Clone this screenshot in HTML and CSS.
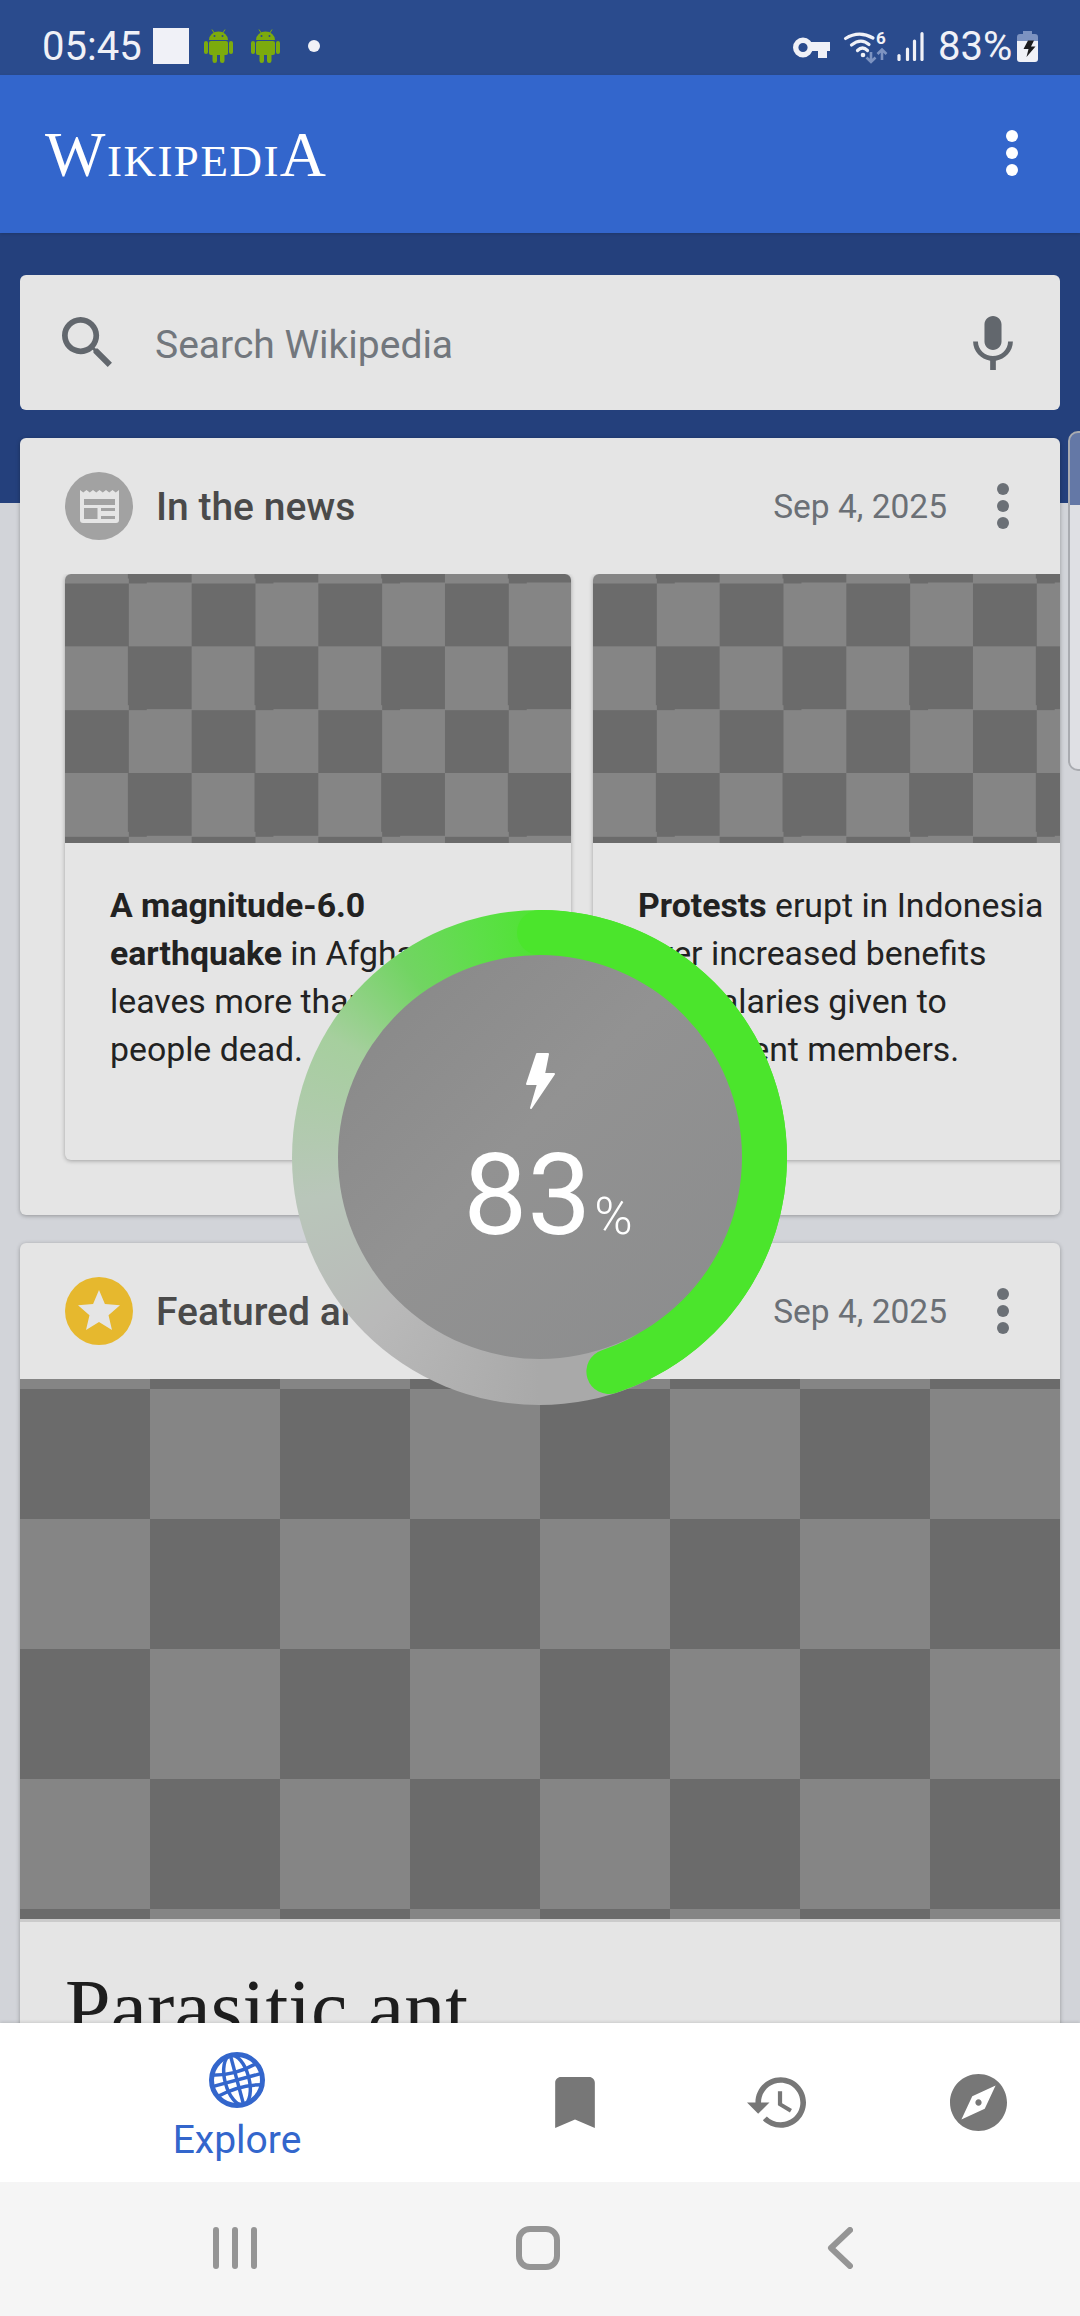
FILE: index.html
```html
<!DOCTYPE html>
<html lang="en">
<head>
  <meta charset="UTF-8">
  <meta name="viewport" content="width=device-width, initial-scale=1.0">
  <title>Wikipedia</title>
  <link rel="stylesheet" href="styles.css">
</head>
<body>
  <div class="status-bar">
    <span class="clock">05:45</span>
    <span class="notif-square"></span>
    <svg class="android" viewBox="0 0 29 34"><use href="#android-bot"/></svg>
    <svg class="android android-second" viewBox="0 0 29 34">
      <g id="android-bot" fill="#7cab0d">
        <path d="M5 11a9.500 8.500 0 0 1 19 0z"/>
        <path d="M8 0.500l2.500 4M21 0.500l-2.500 4" stroke="#7cab0d" stroke-width="1"/>
        <rect x="5" y="12" width="19" height="14" rx="2"/>
        <rect x="0" y="12" width="4" height="13" rx="2"/>
        <rect x="25" y="12" width="4" height="13" rx="2"/>
        <rect x="8.500" y="22" width="4.500" height="12" rx="2.200"/>
        <rect x="16" y="22" width="4.500" height="12" rx="2.200"/>
        <circle cx="10.500" cy="7" r="1" fill="#2a4b8d"/>
        <circle cx="18.500" cy="7" r="1" fill="#2a4b8d"/>
      </g>
    </svg>
    <span class="notif-dot"></span>
    <span class="status-spacer"></span>
    <svg class="key-icon" viewBox="0 0 37 21">
      <circle cx="10" cy="10.500" r="7.300" fill="none" stroke="#f0f1f7" stroke-width="5.400"/>
      <path d="M17 5h20v9h-3v7h-9v-7h-8z" fill="#f0f1f7"/>
    </svg>
    <svg class="wifi-icon" viewBox="0 0 42 32">
      <g fill="none" stroke="#f0f1f7" stroke-width="3.200" stroke-linecap="round">
        <path d="M1.500 7.500Q15 -1 29 7"/>
        <path d="M7.500 14Q17 6.500 25 13.500"/>
        <path d="M13.500 19.500Q18.500 14.500 23.500 19.500"/>
      </g>
      <circle cx="19" cy="24" r="2.300" fill="#f0f1f7"/>
      <text class="wifi-six" x="32" y="13">6</text>
      <g fill="none" stroke="#7d93c1" stroke-width="2.600">
        <path d="M27 21v10M22.500 26.500l4.500 4.500 4.500-4.500"/>
        <path d="M38 29V19M33.500 23l4.500-4.500 4.500 4.500"/>
      </g>
    </svg>
    <svg class="signal-icon" viewBox="0 0 27 29">
      <g stroke="#f0f1f7" stroke-width="3.200" stroke-linecap="round">
        <path d="M2 23.500v4"/>
        <path d="M10.500 17v10.500"/>
        <path d="M17.500 9v18.500"/>
        <path d="M25 1.700v25.800"/>
      </g>
    </svg>
    <span class="battery-text">83%</span>
    <svg class="battery-icon" viewBox="0 0 21 31">
      <path d="M6 0h9v3h3a3 3 0 0 1 3 3v5H0V6a3 3 0 0 1 3-3h3z" fill="#7d93c1"/>
      <path d="M0 10h21v18a3 3 0 0 1-3 3H3a3 3 0 0 1-3-3z" fill="#f0f1f7"/>
      <path d="M11 9.500h6l-3 6h4.500l-9 10.500 2-8H6.500z" fill="#1c1c1e"/>
    </svg>
  </div>

  <div class="toolbar">
    <span class="wordmark">WikipediA</span>
    <span class="dots dots-white"><i></i><i></i><i></i></span>
  </div>

  <div class="content">
    <div class="search-card">
      <svg class="search-icon" viewBox="3 3 17.500 17.500"><path d="M15.500 14h-.79l-.28-.27C15.410 12.590 16 11.110 16 9.500 16 5.910 13.090 3 9.500 3S3 5.910 3 9.500 5.910 16 9.500 16c1.610 0 3.090-.59 4.230-1.570l.27.28v.79l5 4.990L20.490 19l-4.990-5zm-6 0C7.010 14 5 11.990 5 9.500S7.010 5 9.500 5 14 7.010 14 9.500 11.990 14 9.500 14z"/></svg>
      <span class="search-text">Search Wikipedia</span>
      <svg class="mic-icon" viewBox="5 2 14 19"><path d="M12 14c1.660 0 3-1.340 3-3V5c0-1.660-1.340-3-3-3S9 3.340 9 5v6c0 1.660 1.340 3 3 3zm5.300-3c0 3-2.540 5.100-5.300 5.100S6.700 14 6.700 11H5c0 3.410 2.720 6.230 6 6.720V21h2v-3.280c3.280-.48 6-3.300 6-6.720h-1.700z"/></svg>
    </div>

    <div class="card news-card">
      <div class="card-header">
        <span class="header-badge badge-grey">
          <svg class="news-glyph" viewBox="0 0 39 33">
            <path d="M0 0l3.250 2.500L6.500 0l3.250 2.500L13 0l3.250 2.500L19.500 0l3.250 2.500L26 0l3.250 2.500L32.500 0l3.250 2.500L39 0v30a3 3 0 0 1-3 3H3a3 3 0 0 1-3-3z" fill="#e5e5e5"/>
            <rect x="4" y="9" width="31" height="6" fill="#a2a2a2"/>
            <rect x="4" y="18" width="13.500" height="11" fill="#a2a2a2"/>
            <rect x="21" y="18" width="14" height="3" fill="#a2a2a2"/>
            <rect x="21" y="26" width="14" height="3" fill="#a2a2a2"/>
          </svg>
        </span>
        <span class="header-title">In the news</span>
        <span class="header-date">Sep 4, 2025</span>
        <span class="dots"><i></i><i></i><i></i></span>
      </div>
      <div class="news-row">
        <div class="news-item">
          <div class="checker checker-small"></div>
          <p class="news-text"><b>A magnitude-6.0 earthquake</b> in Afghanistan leaves more than 2,200 people dead.</p>
        </div>
        <div class="news-item">
          <div class="checker checker-small"></div>
          <p class="news-text"><b>Protests</b> erupt in Indonesia over increased benefits and salaries given to parliament members.</p>
        </div>
      </div>
    </div>

    <div class="card feature-card">
      <div class="card-header">
        <span class="header-badge badge-yellow">
          <svg class="star-glyph" viewBox="2 2 20 19"><path d="M12 17.270L18.180 21l-1.640-7.030L22 9.240l-7.190-.61L12 2 9.190 8.630 2 9.240l5.460 4.730L5.820 21z"/></svg>
        </span>
        <span class="header-title">Featured article</span>
        <span class="header-date">Sep 4, 2025</span>
        <span class="dots"><i></i><i></i><i></i></span>
      </div>
      <div class="checker checker-large"></div>
      <h2 class="feature-title">Parasitic ant</h2>
    </div>
  </div>

  <div class="bottom-nav">
    <div class="nav-item nav-item-active">
      <svg class="globe-icon" viewBox="0 0 56 56">
        <circle cx="28" cy="28" r="25.500"/>
        <g transform="rotate(-15 28 28)">
          <ellipse cx="28" cy="28" rx="12" ry="25.500"/>
          <path d="M28 2.500v51"/>
          <path d="M5 17q23 6 46 0"/>
          <path d="M5 39q23-6 46 0"/>
          <path d="M2.500 28h51"/>
        </g>
      </svg>
      <span class="nav-label">Explore</span>
    </div>
    <div class="nav-item">
      <svg class="bookmark-icon" viewBox="5 3 14 18"><path d="M17 3H7c-1.100 0-1.990.9-1.990 2L5 21l7-3 7 3V5c0-1.100-.9-2-2-2z"/></svg>
    </div>
    <div class="nav-item">
      <svg class="history-icon" viewBox="1 3 21 18"><path d="M13 3c-4.970 0-9 4.030-9 9H1l3.890 3.890.07.14L9 12H6c0-3.870 3.130-7 7-7s7 3.130 7 7-3.130 7-7 7c-1.930 0-3.680-.79-4.940-2.060l-1.420 1.420C8.270 19.990 10.510 21 13 21c4.970 0 9-4.030 9-9s-4.030-9-9-9zm-1 5v5l4.280 2.540.72-1.210-3.500-2.080V8H12z"/></svg>
    </div>
    <div class="nav-item">
      <svg class="compass-icon" viewBox="2 2 20 20"><path d="M12 10.900c-.61 0-1.100.49-1.100 1.100s.49 1.100 1.100 1.100c.61 0 1.100-.49 1.100-1.100s-.49-1.100-1.100-1.100zM12 2C6.480 2 2 6.480 2 12s4.480 10 10 10 10-4.480 10-10S17.520 2 12 2zm2.190 12.190L6 18l3.810-8.190L18 6l-3.810 8.190z"/></svg>
    </div>
  </div>

  <div class="system-nav">
    <svg class="recents-icon" viewBox="0 0 44 42">
      <path d="M3 3v36M22 3v36M41 3v36"/>
    </svg>
    <span class="home-icon"></span>
    <svg class="back-icon" viewBox="0 0 26 42">
      <path d="M23 3L4 21l19 18"/>
    </svg>
  </div>

  <div class="edge-handle"></div>

  <div class="charge-ring">
    <svg class="charge-arc" viewBox="0 0 495 495">
      <circle cx="247.500" cy="247.500" r="225" transform="rotate(-90 247.500 247.500)"/>
    </svg>
    <div class="charge-disc">
      <svg class="charge-bolt" viewBox="0 0 29 56"><path d="M11 1h11l-4 20h10L5 55l7-24H1z"/></svg>
      <div class="charge-value"><span class="charge-number">83</span><span class="charge-percent">%</span></div>
    </div>
  </div>
</body>
</html>
```

FILE: styles.css
```css
body {
  font-family: Roboto, sans-serif;
  background-color: #d2d4d9;
  margin: 0;
  width: 1080px;
  height: 2316px;
  overflow: hidden;
  position: relative;
  display: flex;
  flex-direction: column;
}

/* status bar */
.status-bar {
  height: 75px;
  flex: none;
  display: flex;
  align-items: center;
  padding: 17px 42px 0 42px;
  background-color: #2a4b8d;
  color: #f0f1f7;
  box-sizing: border-box;
}
.clock {
  font-size: 40px;
  width: 111px;
}
.notif-square {
  width: 36px;
  height: 36px;
  background-color: #f0f1f7;
}
.android {
  width: 29px;
  height: 34px;
  margin-left: 15px;
}
.android-second {
  margin-left: 18px;
}
.notif-dot {
  width: 12px;
  height: 12px;
  border-radius: 50%;
  background-color: #f0f1f7;
  margin-left: 28px;
}
.status-spacer {
  flex: 1;
}
.key-icon {
  width: 37px;
  height: 21px;
  margin-top: 2px;
}
.wifi-icon {
  width: 42px;
  height: 32px;
  margin-left: 14px;
  margin-top: 1px;
  overflow: visible;
}
.wifi-six {
  font-family: Roboto, sans-serif;
  font-size: 17px;
  font-weight: 700;
  fill: #f0f1f7;
}
.signal-icon {
  width: 27px;
  height: 29px;
  margin-left: 11px;
  margin-top: 1px;
}
.battery-text {
  font-size: 40px;
  margin-left: 14px;
  width: 79px;
  white-space: nowrap;
}
.battery-icon {
  width: 21px;
  height: 31px;
}

/* toolbar */
.toolbar {
  height: 158px;
  flex: none;
  display: flex;
  align-items: center;
  justify-content: space-between;
  padding: 0 62px 0 45px;
  background-color: #3366cc;
  position: relative;
  z-index: 1;
  box-shadow: 0 1px 3px rgba(0, 0, 0, 0.15);
}
.wordmark {
  font-family: "Liberation Serif", serif;
  font-variant: small-caps;
  font-size: 64px;
  letter-spacing: 1.500px;
  color: #fff;
  margin-top: 1px;
}
.dots {
  display: flex;
  flex-direction: column;
  gap: 5px;
}
.dots i {
  width: 12px;
  height: 12px;
  border-radius: 50%;
  background-color: #6b7076;
}
.dots-white {
  margin-top: -2px;
}
.dots-white i {
  background-color: #fff;
}

/* feed */
.content {
  flex: 1;
  min-height: 0;
  overflow: hidden;
  padding: 42px 20px 0;
  background: linear-gradient(#24407c 270px, #d2d4d9 270px);
}
.search-card {
  height: 135px;
  display: flex;
  align-items: center;
  padding: 0 47px 0 42px;
  margin-bottom: 28px;
  background-color: #e5e5e5;
  border-radius: 6px;
  box-sizing: border-box;
}
.search-icon {
  width: 50px;
  height: 50px;
  fill: #62676d;
  margin-top: -1px;
}
.search-text {
  flex: 1;
  font-size: 39px;
  color: #72777d;
  margin-left: 43px;
  margin-top: 5px;
}
.mic-icon {
  width: 40px;
  height: 54px;
  fill: #62676d;
}
.card {
  background-color: #e5e5e5;
  border-radius: 6px;
  box-shadow: 0 1px 4px rgba(0, 0, 0, 0.3);
  margin-bottom: 28px;
  overflow: hidden;
}
.news-card {
  height: 777px;
}
.card-header {
  height: 136px;
  display: flex;
  align-items: center;
  padding: 0 51px 0 45px;
  box-sizing: border-box;
}
.header-badge {
  width: 68px;
  height: 68px;
  border-radius: 50%;
  display: flex;
  align-items: center;
  justify-content: center;
  flex: none;
}
.badge-grey {
  background-color: #a2a2a2;
}
.badge-yellow {
  background-color: #e6b82e;
}
.news-glyph {
  width: 39px;
  height: 33px;
  margin-top: 1px;
}
.star-glyph {
  width: 42px;
  height: 40px;
  fill: #e5e5e5;
  margin-top: -2px;
}
.header-title {
  flex: 1;
  margin-left: 23px;
  margin-top: 2px;
  font-size: 39px;
  font-weight: 500;
  color: #4a4a4a;
}
.header-date {
  font-size: 33.500px;
  color: #6b7076;
  margin-right: 50px;
}
.news-row {
  display: flex;
  gap: 22px;
  padding: 0 0 6px 45px;
  overflow: hidden;
}
.news-item {
  width: 506px;
  height: 586px;
  flex: none;
  background-color: #e5e5e5;
  border-radius: 6px;
  box-shadow: 0 1px 4px rgba(0, 0, 0, 0.3);
  overflow: hidden;
}
.checker {
  background-image: repeating-conic-gradient(#6b6b6b 0 25%, #858585 0 50%);
}
.checker-small {
  height: 269px;
  background-size: 126.660px 126.660px;
  background-position: 0 -54.330px;
}
.checker-large {
  height: 540px;
  background-size: 260px 260px;
  background-position: 0 -120px;
  border-bottom: 3px solid #cbcbcb;
}
.news-text {
  margin: 39px 0 0;
  padding: 0 53px 0 45px;
  font-size: 33.800px;
  line-height: 48px;
  color: #222;
}
.news-text b {
  font-weight: 700;
}
.feature-title {
  margin: 37px 0 0 45px;
  font-family: "Liberation Serif", serif;
  font-size: 82px;
  font-weight: 400;
  line-height: 100px;
  color: #1e1e1e;
}

/* bottom navigation */
.bottom-nav {
  height: 159px;
  flex: none;
  display: grid;
  grid-template-columns: 474px 202px 201px 203px;
  background-color: #fff;
  position: relative;
  box-shadow: 0 -1px 3px rgba(0, 0, 0, 0.12);
}
.nav-item {
  display: flex;
  flex-direction: column;
  align-items: center;
  justify-content: center;
}
.nav-item-active {
  justify-content: flex-start;
  padding-top: 29px;
}
.nav-label {
  font-size: 39px;
  line-height: 42px;
  margin-top: 11px;
  color: #3366cc;
}
.globe-icon {
  width: 56px;
  height: 56px;
  fill: none;
  stroke: #3366cc;
  stroke-width: 3.500;
}
.globe-icon > circle {
  stroke-width: 5;
}
.bookmark-icon {
  width: 40px;
  height: 51px;
  fill: #777;
}
.history-icon {
  width: 59px;
  height: 51px;
  fill: #777;
}
.compass-icon {
  width: 57px;
  height: 57px;
  fill: #777;
}

/* android system navigation */
.system-nav {
  height: 134px;
  flex: none;
  display: flex;
  align-items: center;
  background-color: #f5f5f5;
  position: relative;
}
.recents-icon {
  width: 44px;
  height: 42px;
  margin-left: 213px;
  margin-top: -2px;
  fill: none;
  stroke: #959595;
  stroke-width: 6;
  stroke-linecap: round;
}
.home-icon {
  width: 44px;
  height: 44px;
  margin-left: 259px;
  margin-top: -2px;
  border: 6px solid #959595;
  border-radius: 14px;
  box-sizing: border-box;
}
.back-icon {
  width: 26px;
  height: 42px;
  margin-left: 267px;
  margin-top: -2px;
  fill: none;
  stroke: #959595;
  stroke-width: 6;
  stroke-linecap: round;
  stroke-linejoin: round;
}

/* overlays */
.edge-handle {
  position: absolute;
  left: 1068px;
  top: 431px;
  width: 24px;
  height: 340px;
  box-sizing: border-box;
  background: linear-gradient(#6478a6 72px, #dfe0e4 72px);
  border: 2px solid #a9abb0;
  border-radius: 10px;
}
.charge-ring {
  position: absolute;
  left: 292px;
  top: 910px;
  width: 495px;
  height: 495px;
  border-radius: 50%;
  background: conic-gradient(from 180deg,
    #a9a9a9 0deg,
    #b9b9b9 45deg,
    #b9c6ba 80deg,
    #a6cf9e 120deg,
    #72d463 145deg,
    #5cdf47 165deg,
    #4be52c 185deg,
    #4be52c 330deg,
    #a9a9a9 335deg,
    #a9a9a9 360deg);
}
.charge-arc {
  position: absolute;
  left: 0;
  top: 0;
  width: 495px;
  height: 495px;
  fill: none;
  stroke: #4be52c;
  stroke-width: 45;
  stroke-linecap: round;
  stroke-dasharray: 636 1414;
}
.charge-disc {
  position: absolute;
  left: 46px;
  top: 45px;
  width: 404px;
  height: 404px;
  border-radius: 50%;
  background: linear-gradient(135deg, #878787, #929292 45%, #8b8c8d);
  color: #fff;
  display: flex;
  flex-direction: column;
  align-items: center;
  padding-top: 98px;
  box-sizing: border-box;
}
.charge-bolt {
  width: 29px;
  height: 56px;
  fill: #fff;
  stroke: #fff;
  stroke-width: 2;
  stroke-linejoin: round;
}
.charge-value {
  padding-left: 16px;
  line-height: 1;
  white-space: nowrap;
  margin-top: 29px;
}
.charge-number {
  font-size: 114px;
}
.charge-percent {
  font-size: 52px;
  font-weight: 300;
  margin-left: 3px;
}
```
